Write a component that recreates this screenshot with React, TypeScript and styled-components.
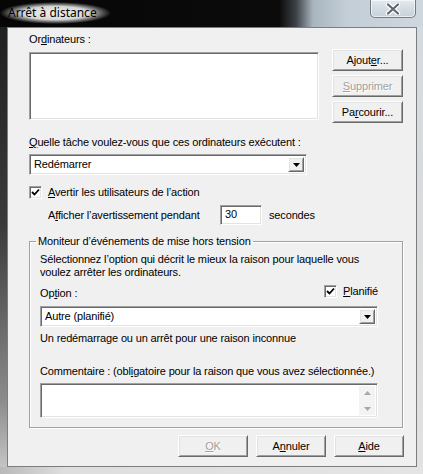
import React from "react";
import styled, { createGlobalStyle, css } from "styled-components";

const GlobalStyle = createGlobalStyle`
  html, body {
    margin: 0;
    padding: 0;
    background: #d8d8d8;
  }
  body {
    font-family: "Liberation Sans", Arial, sans-serif;
    font-size: 11px;
    color: #000;
  }
`;

const sunken = css`
  box-sizing: border-box;
  border: 1px solid;
  border-color: #a0a0a0 #ffffff #ffffff #a0a0a0;
  box-shadow: inset 1px 1px 0 #696969, inset -1px -1px 0 #e3e3e3;
  background: #fff;
`;

const raised = css`
  box-sizing: border-box;
  border: 1px solid;
  border-color: #ffffff #696969 #696969 #ffffff;
  box-shadow: inset 1px 1px 0 #e3e3e3, inset -1px -1px 0 #a0a0a0;
  background: #f0f0f0;
`;

const Window = styled.div`
  width: 423px;
  height: 474px;
  display: flex;
  flex-direction: column;
  overflow: hidden;
`;

const TitleBar = styled.div`
  height: 27px;
  flex: none;
  display: flex;
  align-items: flex-start;
  justify-content: space-between;
  padding-left: 0;
  box-sizing: border-box;
  background: linear-gradient(
    90deg,
    #060606 0%,
    #0b0b0b 66%,
    #3d4247 70%,
    #a9b5bf 74%,
    #c3ced7 82%,
    #cfd7de 100%
  );
`;

const Title = styled.span`
  margin-top: 2px;
  padding: 3px 14px 3px 8px;
  font-family: "Noto Sans", "Open Sans", sans-serif;
  font-size: 12px;
  line-height: 16px;
  color: #000;
  background: radial-gradient(
    closest-side,
    rgba(240, 240, 240, 1) 0%,
    rgba(225, 225, 225, 0.95) 60%,
    rgba(190, 190, 190, 0) 100%
  );
`;

const CloseButton = styled.div`
  width: 46px;
  height: 18px;
  margin-right: 7px;
  box-sizing: border-box;
  border: 1px solid rgba(70, 80, 90, 0.7);
  border-top: none;
  border-radius: 0 0 5px 5px;
  background: linear-gradient(180deg, #e4eaef 0%, #d3dce3 50%, #c7d1da 100%);
  box-shadow: inset 0 0 0 1px rgba(255, 255, 255, 0.6);
  display: flex;
  align-items: center;
  justify-content: center;
`;

const FrameRow = styled.div`
  flex: 1;
  display: flex;
  min-height: 0;
`;

const SideEdge = styled.div<{ $side: "left" | "right" }>`
  flex: none;
  width: ${({ $side }) => ($side === "left" ? "7px" : "6px")};
  background: ${({ $side }) =>
    $side === "left"
      ? "linear-gradient(180deg, #202020 0%, #3a3a3a 45%, #8c8c8c 85%, #c4c4c4 100%)"
      : "linear-gradient(180deg, #d4dbe1 0%, #dcdcdc 60%, #e2e2e2 100%)"};
`;

const BottomEdge = styled.div`
  height: 7px;
  flex: none;
  background: linear-gradient(90deg, #b8b8b8 0%, #dedede 15%, #e4e4e4 100%);
`;

const Client = styled.div`
  flex: 1;
  display: flex;
  flex-direction: column;
  box-sizing: border-box;
  border: 1px solid #7d7d7d;
  background: #f0f0f0;
  padding: 5px 12px 0 21px;
`;

const Label = styled.div`
  line-height: 13px;
  height: 13px;
  white-space: nowrap;
  letter-spacing: -0.15px;
`;

const Accel = styled.u`
  text-decoration: underline;
  text-underline-offset: 1px;
`;

const TopRow = styled.div`
  display: flex;
  align-items: flex-start;
  gap: 13px;
`;

const ListColumn = styled.div`
  display: flex;
  flex-direction: column;
  gap: 6px;
`;

const ListBox = styled.div`
  ${sunken};
  width: 290px;
  height: 68px;
`;

const ButtonColumn = styled.div`
  display: flex;
  flex-direction: column;
  gap: 4px;
  margin-top: 16px;
`;

const PushButton = styled.button`
  ${raised};
  width: 71px;
  height: 22px;
  padding: 0;
  font-family: "Liberation Sans", Arial, sans-serif;
  font-size: 11px;
  letter-spacing: -0.15px;
  color: #000;
  &:disabled {
    color: #a0a0a0;
    text-shadow: 1px 1px 0 #fff;
  }
`;

const Spaced = styled.div<{ $top: number }>`
  margin-top: ${({ $top }) => $top}px;
`;

const Combo = styled.div<{ $width: number }>`
  ${sunken};
  width: ${({ $width }) => $width}px;
  height: 21px;
  display: flex;
  align-items: stretch;
  padding: 2px;
`;

const ComboText = styled.div`
  flex: 1;
  line-height: 15px;
  padding-left: 2px;
  letter-spacing: -0.15px;
  white-space: nowrap;
`;

const DropButton = styled.div`
  ${raised};
  width: 16px;
  flex: none;
  display: flex;
  align-items: center;
  justify-content: center;
`;

const CheckRow = styled.label`
  display: flex;
  align-items: center;
  gap: 6px;
  height: 13px;
`;

const CheckBox = styled.span`
  ${sunken};
  width: 13px;
  height: 13px;
  flex: none;
  display: flex;
  align-items: center;
  justify-content: center;
`;

const DelayRow = styled.div`
  display: flex;
  align-items: center;
  height: 20px;
  padding-left: 19px;
`;

const DelayLabel = styled.span`
  width: 172px;
  white-space: nowrap;
  letter-spacing: -0.15px;
`;

const NumberBox = styled.div`
  ${sunken};
  width: 42px;
  height: 20px;
  line-height: 17px;
  padding-left: 4px;
  letter-spacing: -0.15px;
`;

const Unit = styled.span`
  margin-left: 7px;
  letter-spacing: -0.15px;
`;

const Group = styled.fieldset`
  margin: 10px 0 0 0;
  width: 374px;
  box-sizing: border-box;
  border: 1px solid #a0a0a0;
  box-shadow: 1px 1px 0 #fff, inset 1px 1px 0 #fff;
  padding: 5px 24px 9px 10px;
  display: flex;
  flex-direction: column;
`;

const GroupLegend = styled.legend`
  margin-left: -4px;
  padding: 0 2px;
  line-height: 13px;
  letter-spacing: -0.15px;
`;

const Paragraph = styled.div`
  line-height: 13px;
  letter-spacing: -0.15px;
`;

const OptionRow = styled.div`
  display: flex;
  justify-content: space-between;
  align-items: flex-start;
  margin-top: 6px;
`;

const OptionLabel = styled.span`
  padding-top: 2px;
  line-height: 13px;
  letter-spacing: -0.15px;
`;

const CommentBox = styled.div`
  ${sunken};
  width: 338px;
  height: 35px;
  margin-top: 5px;
  display: flex;
  justify-content: flex-end;
  padding: 2px;
`;

const ScrollTrack = styled.div`
  width: 16px;
  background: #f3f3f3;
  display: flex;
  flex-direction: column;
  justify-content: space-between;
  align-items: center;
  padding: 5px 0 4px;
  box-sizing: border-box;
`;

const FooterRow = styled.div`
  display: flex;
  justify-content: flex-end;
  gap: 8px;
  margin-top: 7px;
`;

const FooterButton = styled(PushButton)`
  width: 70px;
`;

const Arrow = ({ up, color = "#000" }: { up?: boolean; color?: string }) => (
  <svg width="7" height="4" viewBox="0 0 7 4">
    <path d={up ? "M3.5 0 L7 4 L0 4 Z" : "M0 0 L7 0 L3.5 4 Z"} fill={color} />
  </svg>
);

const Check = () => (
  <svg width="9" height="9" viewBox="0 0 9 9">
    <path d="M1 4 L3.5 6.5 L8 1.5" stroke="#000" strokeWidth="1.8" fill="none" />
  </svg>
);

const CloseGlyph = () => (
  <svg width="16" height="12" viewBox="0 0 16 12">
    <path d="M3 1.5 L13 10.5 M13 1.5 L3 10.5" stroke="#fff" strokeWidth="4.5" strokeLinecap="round" />
    <path d="M3 1.5 L13 10.5 M13 1.5 L3 10.5" stroke="#5d6670" strokeWidth="2.2" strokeLinecap="round" />
  </svg>
);

export default function App() {
  return (
    <>
      <GlobalStyle />
      <Window>
        <TitleBar>
          <Title>Arrêt à distance</Title>
          <CloseButton>
            <CloseGlyph />
          </CloseButton>
        </TitleBar>
        <FrameRow>
          <SideEdge $side="left" />
          <Client>
            <TopRow>
              <ListColumn>
                <Label>
                  Or<Accel>d</Accel>inateurs :
                </Label>
                <ListBox />
              </ListColumn>
              <ButtonColumn>
                <PushButton>
                  Ajout<Accel>e</Accel>r...
                </PushButton>
                <PushButton disabled>
                  <Accel>S</Accel>upprimer
                </PushButton>
                <PushButton>
                  Pa<Accel>r</Accel>courir...
                </PushButton>
              </ButtonColumn>
            </TopRow>

            <Spaced $top={13}>
              <Label>
                <Accel>Q</Accel>uelle tâche voulez-vous que ces ordinateurs exécutent :
              </Label>
            </Spaced>
            <Spaced $top={5}>
              <Combo $width={278}>
                <ComboText>Redémarrer</ComboText>
                <DropButton>
                  <Arrow />
                </DropButton>
              </Combo>
            </Spaced>

            <Spaced $top={11}>
              <CheckRow>
                <CheckBox>
                  <Check />
                </CheckBox>
                <Label>
                  <Accel>A</Accel>vertir les utilisateurs de l’action
                </Label>
              </CheckRow>
            </Spaced>

            <Spaced $top={6}>
              <DelayRow>
                <DelayLabel>
                  A<Accel>f</Accel>ficher l’avertissement pendant
                </DelayLabel>
                <NumberBox>30</NumberBox>
                <Unit>secondes</Unit>
              </DelayRow>
            </Spaced>

            <Group>
              <GroupLegend>Moniteur d’événements de mise hors tension</GroupLegend>
              <Paragraph>
                Sélectionnez l’option qui décrit le mieux la raison pour laquelle vous
                <br />
                voulez arrêter les ordinateurs.
              </Paragraph>
              <OptionRow>
                <OptionLabel>
                  Op<Accel>t</Accel>ion :
                </OptionLabel>
                <CheckRow>
                  <CheckBox>
                    <Check />
                  </CheckBox>
                  <Label>
                    <Accel>P</Accel>lanifié
                  </Label>
                </CheckRow>
              </OptionRow>
              <Spaced $top={6}>
                <Combo $width={338}>
                  <ComboText>Autre (planifié)</ComboText>
                  <DropButton>
                    <Arrow />
                  </DropButton>
                </Combo>
              </Spaced>
              <Spaced $top={5}>
                <Paragraph>Un redémarrage ou un arrêt pour une raison inconnue</Paragraph>
              </Spaced>
              <Spaced $top={20}>
                <Paragraph>
                  Commentaire : (obl<Accel>i</Accel>gatoire pour la raison que vous avez sélectionnée.)
                </Paragraph>
              </Spaced>
              <CommentBox>
                <ScrollTrack>
                  <Arrow up color="#a8a8a8" />
                  <Arrow color="#a8a8a8" />
                </ScrollTrack>
              </CommentBox>
            </Group>

            <FooterRow>
              <FooterButton disabled>
                <Accel>O</Accel>K
              </FooterButton>
              <FooterButton>
                A<Accel>n</Accel>nuler
              </FooterButton>
              <FooterButton>
                <Accel>A</Accel>ide
              </FooterButton>
            </FooterRow>
          </Client>
          <SideEdge $side="right" />
        </FrameRow>
        <BottomEdge />
      </Window>
    </>
  );
}
